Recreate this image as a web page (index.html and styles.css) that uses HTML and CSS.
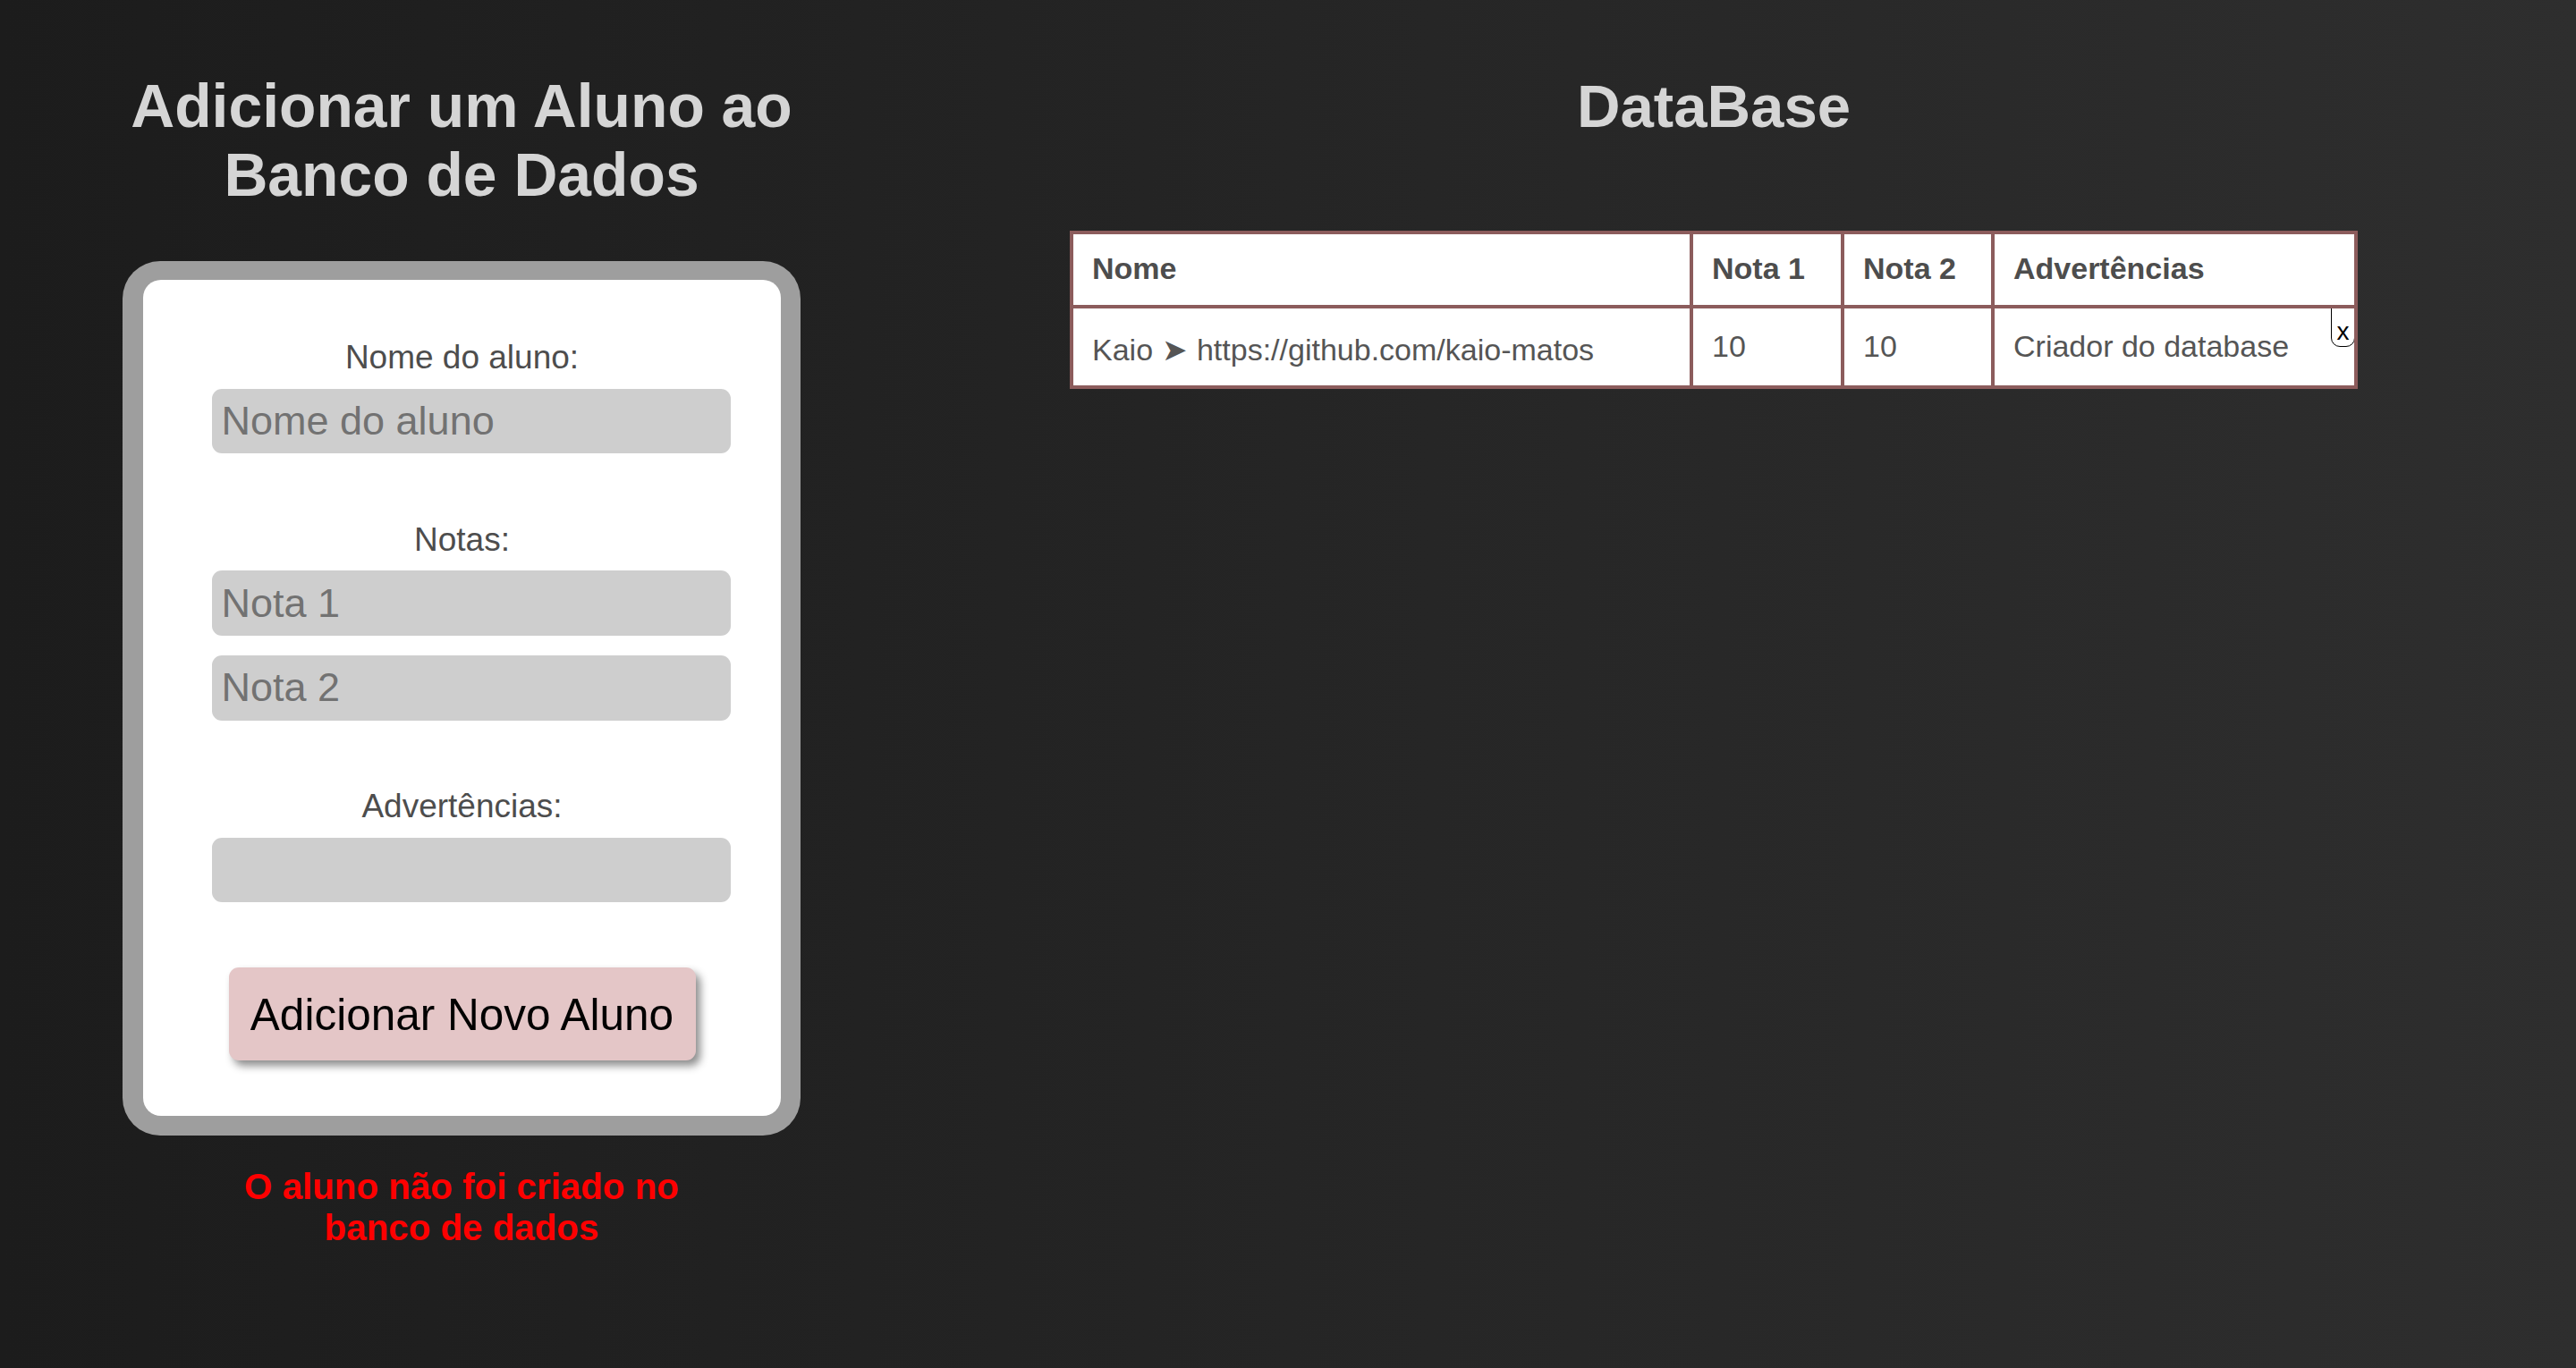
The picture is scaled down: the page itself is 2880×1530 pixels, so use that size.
FILE: index.html
```html
<!DOCTYPE html>
<html lang="pt-BR">
<head>
<meta charset="utf-8">
<title>Banco de Dados de Alunos</title>
<link rel="stylesheet" href="styles.css">
</head>
<body>
<main class="page">
  <section class="add">
    <h1 class="title title-add">Adicionar um Aluno ao Banco de Dados</h1>
    <div class="card">
      <form class="card-inner">
        <div class="field">
          <label class="label">Nome do aluno:</label>
          <input class="input" type="text" placeholder="Nome do aluno">
        </div>
        <div class="field field-gap">
          <label class="label">Notas:</label>
          <input class="input" type="text" placeholder="Nota 1">
          <input class="input input-second" type="text" placeholder="Nota 2">
        </div>
        <div class="field field-gap">
          <label class="label">Advertências:</label>
          <input class="input" type="text">
        </div>
        <button class="submit" type="button">Adicionar Novo Aluno</button>
      </form>
    </div>
    <p class="error">O aluno não foi criado no banco de dados</p>
  </section>
  <section class="db">
    <h1 class="title">DataBase</h1>
    <table class="table">
      <colgroup>
        <col class="col-name">
        <col class="col-n1">
        <col class="col-n2">
        <col class="col-adv">
      </colgroup>
      <thead>
        <tr>
          <th>Nome</th>
          <th>Nota 1</th>
          <th>Nota 2</th>
          <th>Advertências</th>
        </tr>
      </thead>
      <tbody>
        <tr>
          <td class="cell-name">Kaio ➤ https://github.com/kaio-matos</td>
          <td>10</td>
          <td>10</td>
          <td class="cell-adv">Criador do database<button class="remove" type="button">x</button></td>
        </tr>
      </tbody>
    </table>
  </section>
</main>
</body>
</html>
```

FILE: styles.css
```css
html, body {
  margin: 0;
  padding: 0;
}

body {
  min-height: 1530px;
  background: linear-gradient(to right, #1c1c1c, #2e2e2e);
  font-family: "Liberation Sans", Arial, sans-serif;
}

.page {
  display: flex;
  align-items: flex-start;
}

.add {
  width: 1032px;
  flex: none;
  display: flex;
  flex-direction: column;
  align-items: center;
  padding-top: 80px;
}

.db {
  flex: 1;
  display: flex;
  flex-direction: column;
  align-items: center;
  padding-top: 80px;
  padding-right: 80px;
}

.title {
  margin: 0;
  font-size: 67.2px;
  font-weight: bold;
  line-height: normal;
  color: #d5d5d5;
  text-align: center;
}

.title-add {
  width: 820px;
  font-size: 67.8px;
}

.card {
  margin-top: 58px;
  width: 758px;
  box-sizing: border-box;
  padding: 21px 22px 22px 23px;
  background: #9e9e9e;
  border-radius: 42px;
}

.card-inner {
  background: #ffffff;
  border-radius: 20px;
  padding: 66px 0 62px;
  display: flex;
  flex-direction: column;
  align-items: center;
}

.field {
  width: 556px;
  display: flex;
  flex-direction: column;
  align-items: flex-start;
}

.field-gap {
  margin-top: 75.5px;
}

.label {
  align-self: stretch;
  text-align: center;
  font-size: 37px;
  line-height: normal;
  color: #4d4d4d;
  margin-bottom: 13.5px;
}

.input {
  flex: none;
  width: 580px;
  height: 72.7px;
  box-sizing: border-box;
  margin-left: -2px;
  padding: 0 11px;
  border: none;
  outline: none;
  border-radius: 11px;
  background: #cecece;
  font-family: "Liberation Sans", Arial, sans-serif;
  font-size: 45px;
  color: #333333;
}

.input::placeholder {
  color: #727272;
}

.input-second {
  margin-top: 22px;
}

.submit {
  margin-top: 73px;
  width: 522px;
  height: 104px;
  border: none;
  border-radius: 11px;
  background: #e4c6c7;
  box-shadow: 5px 6px 10px rgba(0, 0, 0, 0.45);
  font-family: "Liberation Sans", Arial, sans-serif;
  font-size: 49.5px;
  color: #000000;
  padding: 0;
}

.error {
  margin: 35px 0 0;
  width: 540px;
  text-align: center;
  font-size: 40.3px;
  font-weight: bold;
  line-height: normal;
  color: #ff0000;
}

.table {
  margin-top: 101px;
  width: 1440px;
  table-layout: fixed;
  border-collapse: collapse;
  background: #ffffff;
  border: 4px solid #8c5c5c;
  font-size: 34px;
}

.col-name { width: 693px; }
.col-n1 { width: 169px; }
.col-n2 { width: 168px; }
.col-adv { width: 406px; }

.table th,
.table td {
  border: 4px solid #8c5c5c;
  text-align: left;
  line-height: normal;
  white-space: nowrap;
}

.table th {
  padding: 19px 21px 21px;
  font-weight: bold;
  color: #4d4d4d;
}

.table td {
  padding: 22px 21px 24px;
  color: #555555;
}

.table .cell-name {
  padding-top: 26px;
  padding-bottom: 20px;
  word-spacing: 1px;
}

.cell-adv {
  position: relative;
  overflow: hidden;
}

.remove {
  position: absolute;
  top: -1px;
  right: -1px;
  width: 27px;
  height: 44px;
  box-sizing: border-box;
  padding: 0 0 2px;
  border: 1px solid #000000;
  border-radius: 0 0 10px 10px;
  background: #ffffff;
  font-family: "Liberation Sans", Arial, sans-serif;
  font-size: 28px;
  line-height: 1;
  color: #000000;
  display: flex;
  align-items: flex-end;
  justify-content: center;
}
```
